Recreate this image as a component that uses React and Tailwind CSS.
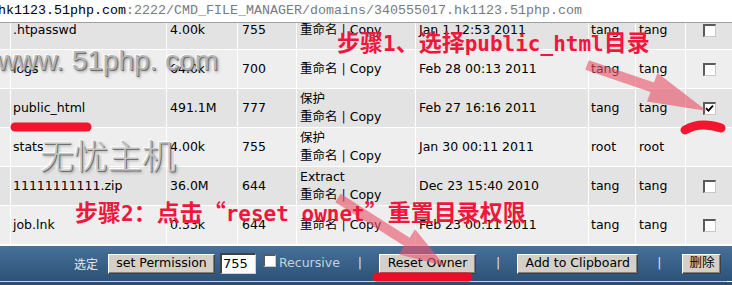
import React from "react";

const rows = [
  { name: ".htpasswd", size: "4.00k", perm: "755", extra: null, date: "Jan 1 12:53 2011", o: "tang", g: "tang", cb: "off", dark: true },
  { name: "logs", size: "64.0k", perm: "700", extra: null, date: "Feb 28 00:13 2011", o: "tang", g: "tang", cb: "off", dark: false },
  { name: "public_html", size: "491.1M", perm: "777", extra: "保护", date: "Feb 27 16:16 2011", o: "tang", g: "tang", cb: "on", dark: true },
  { name: "stats", size: "4.00k", perm: "755", extra: "保护", date: "Jan 30 00:11 2011", o: "root", g: "root", cb: "none", dark: false },
  { name: "11111111111.zip", size: "36.0M", perm: "644", extra: "Extract", date: "Dec 23 15:40 2010", o: "tang", g: "tang", cb: "off", dark: true },
  { name: "job.lnk", size: "0.33k", perm: "644", extra: null, date: "Feb 23 00:11 2011", o: "tang", g: "tang", cb: "off", dark: false },
];

function Box({ checked }) {
  return (
    <div className="w-[13px] h-[13px] bg-white border-t-2 border-l-2 border-b border-r border-t-[#5a5a5a] border-l-[#5a5a5a] border-b-[#c8c8c8] border-r-[#c8c8c8] flex items-center justify-center">
      {checked && (
        <svg width="9" height="9" viewBox="0 0 9 9">
          <path d="M1 4.2 L3.4 6.6 L8 1.6" stroke="#000" strokeWidth="1.8" fill="none" />
        </svg>
      )}
    </div>
  );
}

function Row({ r }) {
  const bg = r.dark ? "bg-[#e3e3e3]" : "bg-[#eeeeee]";
  const cell = `${bg} h-[38px] flex items-center`;
  return (
    <div className="grid grid-cols-[10px_155px_70px_58px_118px_172px_46px_49px_46px] gap-x-px">
      <div className={cell}></div>
      <div className={`${cell} pl-[2px]`}>{r.name}</div>
      <div className={`${cell} pl-[3px]`}>{r.size}</div>
      <div className={`${cell} pl-[4px]`}>{r.perm}</div>
      <div className={`${cell} pl-[3px]`}>
        <div className="flex flex-col leading-[18px]">
          {r.extra && <span>{r.extra}</span>}
          <span className="whitespace-pre">
            重命名 <span className="text-[#300030]">|</span> Copy
          </span>
        </div>
      </div>
      <div className={`${cell} pl-[3px] whitespace-pre`}>{r.date}</div>
      <div className={`${cell} pl-[2px]`}>{r.o}</div>
      <div className={`${cell} pl-[3px]`}>{r.g}</div>
      <div className={`${cell} justify-center`}>
        {r.cb !== "none" && <Box checked={r.cb === "on"} />}
      </div>
    </div>
  );
}

function Btn({ children, w }) {
  return (
    <div
      className={`${w} h-[20px] bg-[#d4d0c8] border border-t-white border-l-white border-b-[#404040] border-r-[#404040] shadow-[inset_-1px_-1px_0_#808080] flex items-center justify-center text-black text-[12.5px]`}
    >
      {children}
    </div>
  );
}

const mono = "font-['DejaVu_Sans_Mono',monospace] text-[21px]";

export default function App() {
  return (
    <div className="relative w-[732px] h-[285px] overflow-hidden bg-white font-['DejaVu_Sans','Noto_Sans_CJK_SC',sans-serif] text-[12.5px] text-black">
      {/* address bar */}
      <div className="h-[23px] border-b border-[#a0a0a0] bg-white flex items-center font-['Liberation_Mono','Noto_Sans_CJK_SC',monospace] text-[13.33px] whitespace-pre -ml-[2px]">
        <span className="text-black">hk1123.51php.com</span>
        <span className="text-[#7a7a7a]">:2222/CMD_FILE_MANAGER/domains/340555017.hk1123.51php.com</span>
      </div>

      {/* table */}
      <div className="h-[223px] overflow-hidden">
        <div className="-mt-[12px] flex flex-col gap-y-px bg-white pb-px">
          {rows.map((r, i) => (
            <Row key={i} r={r} />
          ))}
        </div>
      </div>

      {/* bottom bar */}
      <div className="h-[35px] bg-gradient-to-b from-[#46709a] to-[#2d5278] flex items-center pl-[74px]">
        <span className="text-[12px] text-[#e4e9ef] font-['Noto_Sans_CJK_SC',sans-serif] w-[24px]">选定</span>
        <div className="ml-[10px]">
          <Btn w="w-[107px]">set Permission</Btn>
        </div>
        <div className="ml-[5px] w-[36px] h-[21px] bg-white border-t-2 border-l-2 border-b border-r border-t-[#404040] border-l-[#404040] border-b-[#d4d0c8] border-r-[#d4d0c8] flex items-center pl-[1px] text-[13px]">
          755
        </div>
        <div className="ml-[7px] -mt-[7px]">
          <Box checked={false} />
        </div>
        <span className="ml-[3px] text-[#c6d1dd]">Recursive</span>
        <span className="ml-[18px] text-[#dde4ec]">|</span>
        <div className="ml-[17px]">
          <Btn w="w-[97px]">Reset Owner</Btn>
        </div>
        <span className="ml-[20px] text-[#dde4ec]">|</span>
        <div className="ml-[17px]">
          <Btn w="w-[121px]">Add to Clipboard</Btn>
        </div>
        <span className="ml-[19px] text-[#dde4ec]">|</span>
        <div className="ml-[21px]">
          <Btn w="w-[39px]">删除</Btn>
        </div>
      </div>
      <div className="h-px w-[727px] bg-[#c9d1da]"></div>
      <div className="h-[4px] bg-[#2b4d71]"></div>

      {/* watermarks */}
      <div className="absolute left-[-3px] top-[43px] font-['Liberation_Sans',sans-serif] text-[28px] leading-[36px] tracking-[0px] text-[#b4b4b4] whitespace-pre [text-shadow:1px_1px_0_#6e6e6e,2px_2px_3px_rgba(0,0,0,0.35),-1px_-1px_0_#ffffff]">
        www. 51php. com
      </div>
      <div className="absolute left-[40px] top-[135px] font-['Noto_Sans_CJK_SC',sans-serif] font-light text-[34px] leading-[40px] text-[#c4c4c4] whitespace-pre [text-shadow:1px_1px_0_#6e6e6e,2px_2px_3px_rgba(0,0,0,0.35),-1px_-1px_0_#ffffff]">
        无忧主机
      </div>

      {/* arrows and strokes */}
      <svg className="absolute left-0 top-0 pointer-events-none" width="732" height="285" viewBox="0 0 732 285">
        <polygon
          points="585.2,69.7 588.8,60.3 654,82.5 657.5,73 707,111 647,101.5 650.5,92"
          fill="#e9546a"
          fillOpacity="0.62"
        />
        <polygon
          points="335.3,202.2 340.7,193.8 409.7,237.7 415,229.2 445,266 399,254.6 404.3,246.1"
          fill="#e9546a"
          fillOpacity="0.62"
        />
        <g stroke="#f20a24" strokeWidth="9" strokeLinecap="round" fill="none" opacity="0.95">
          <path d="M15 127 L87 127" />
          <path d="M685 130 Q 700 121 721 128" />
          <path d="M377 277 L468 277" />
        </g>
      </svg>

      {/* annotation text */}
      <div className="absolute left-[337px] top-[27px] leading-[28px] text-[#f0163c] font-bold font-['Noto_Sans_CJK_SC',sans-serif] text-[23px] whitespace-pre flex items-baseline">
        <span>步骤</span>
        <span className={mono}>1</span>
        <span>、选择</span>
        <span className={mono}>public_html</span>
        <span>目录</span>
      </div>
      <div className="absolute left-[75px] top-[197px] leading-[28px] text-[#f0163c] font-bold font-['Noto_Sans_CJK_SC',sans-serif] text-[23px] whitespace-pre flex items-baseline">
        <span>步骤</span>
        <span className={mono}>2</span>
        <span>：点击“</span>
        <span className={mono}>reset ownet</span>
        <span>”重置目录权限</span>
      </div>
    </div>
  );
}
